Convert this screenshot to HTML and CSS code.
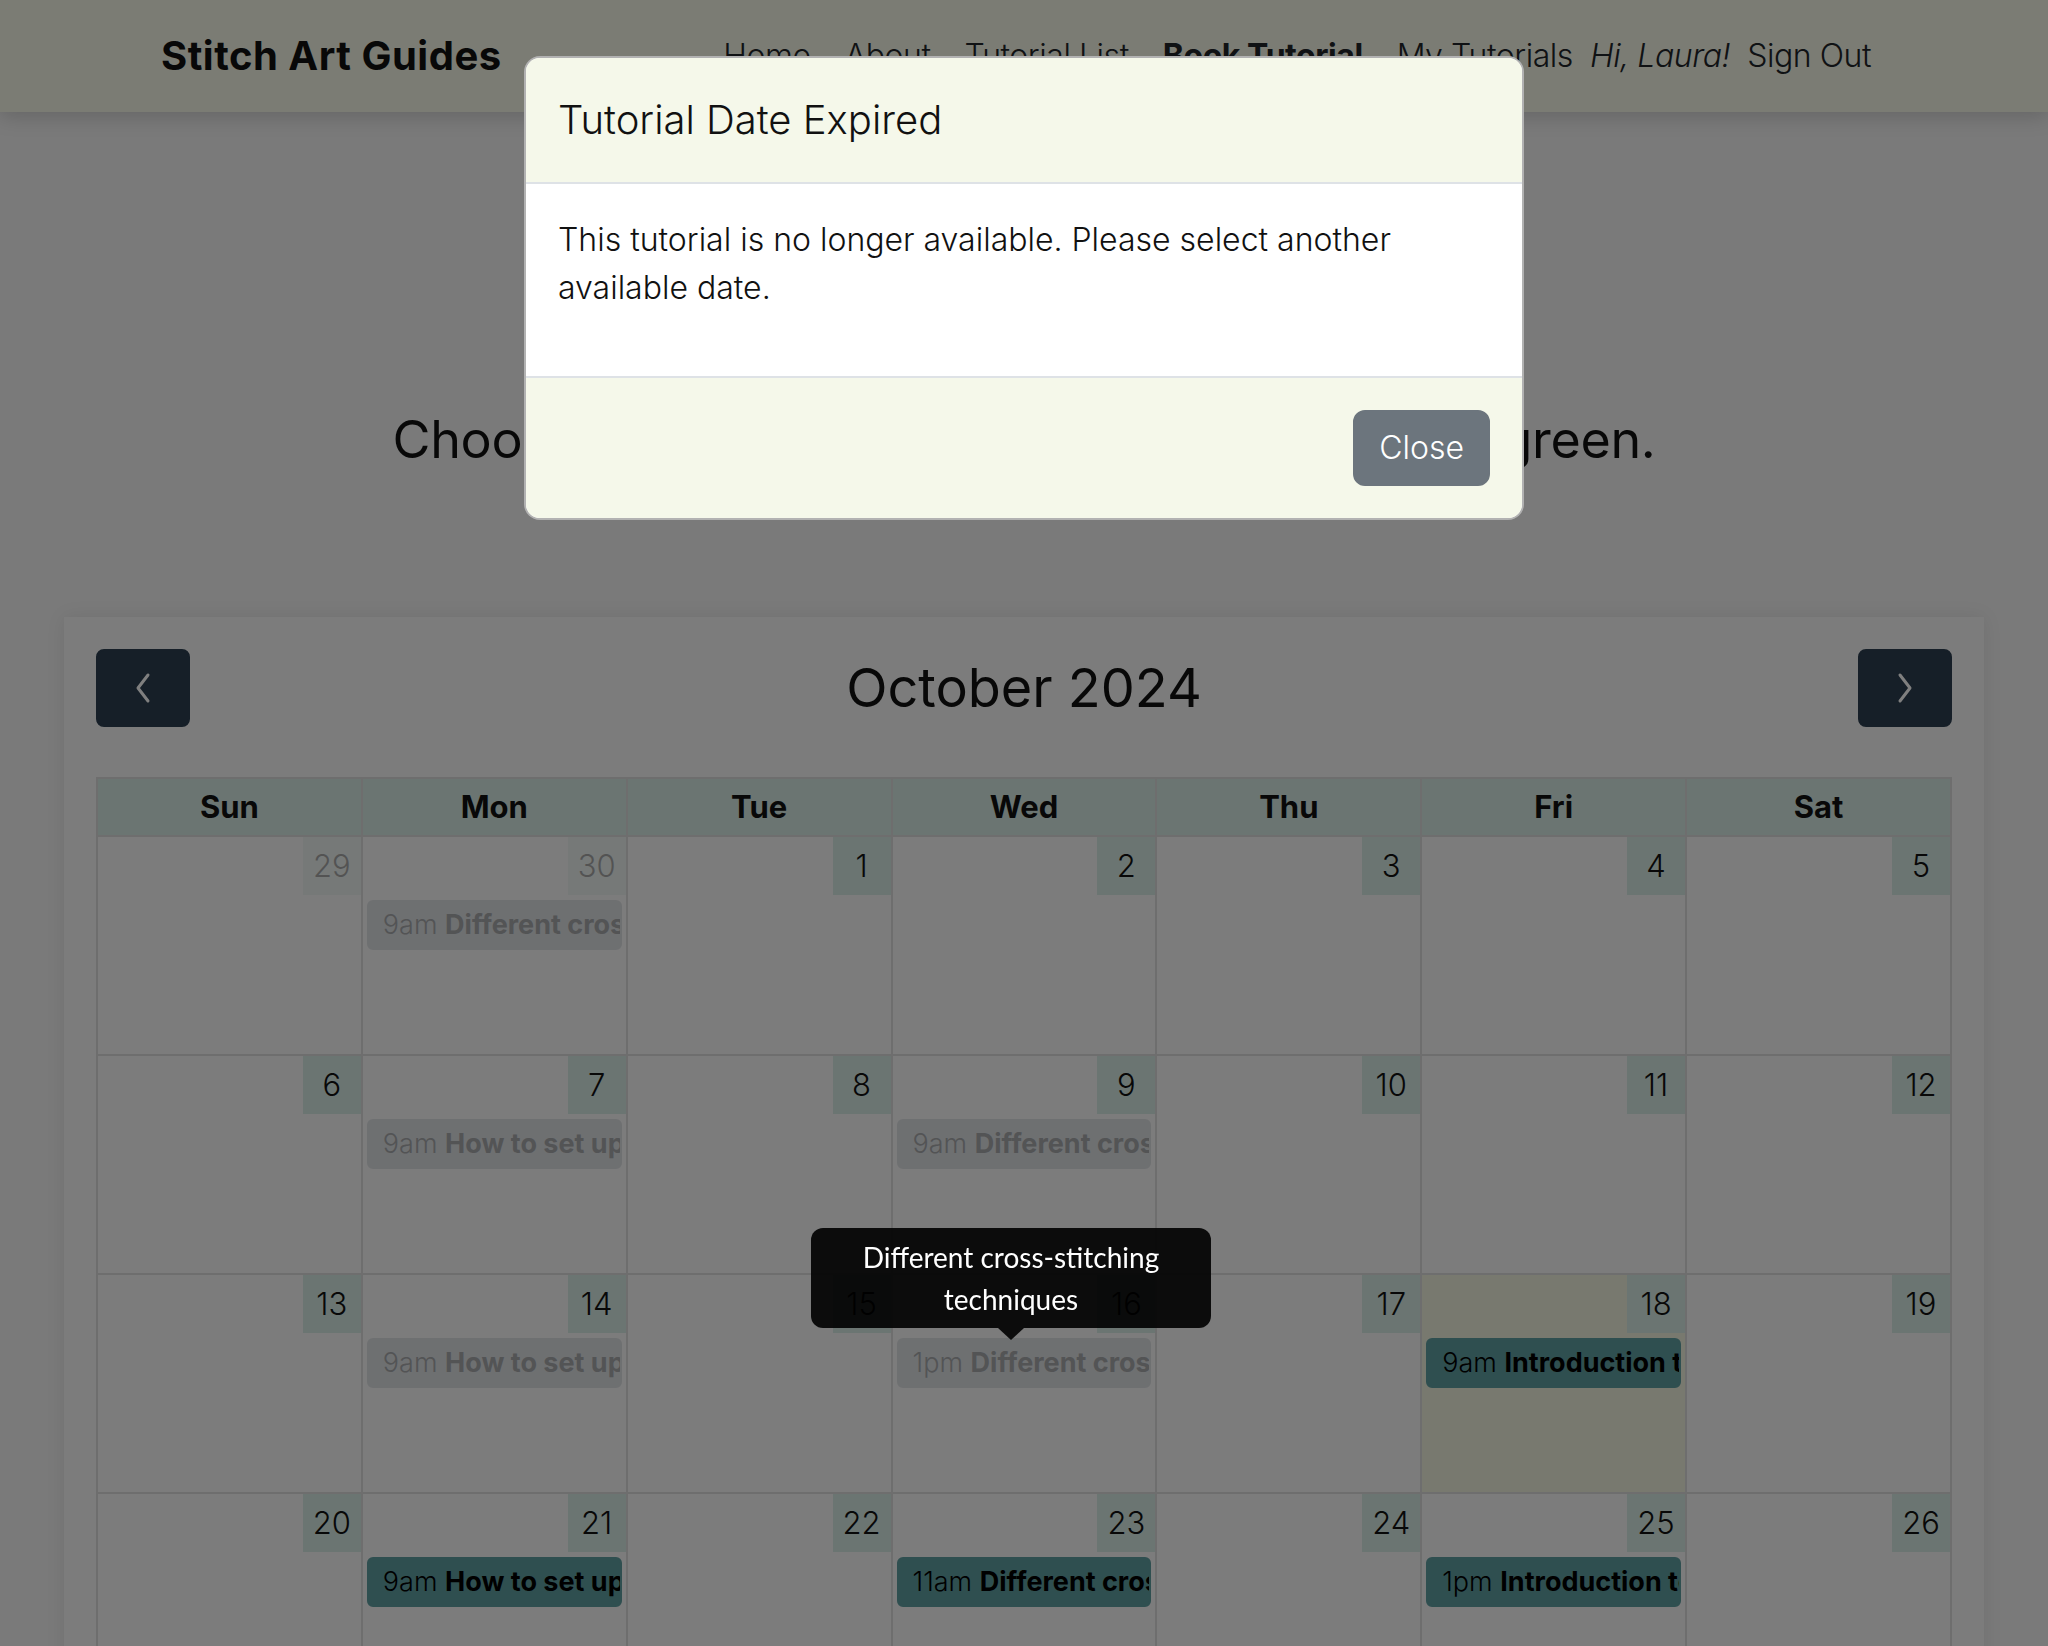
FILE: index.html
```html
<!DOCTYPE html>
<html lang="en">
<head>
<meta charset="utf-8">
<title>Book Tutorial - Stitch Art Guides</title>
<link rel="stylesheet" href="styles.css">
</head>
<body>
<nav class="navbar">
  <a class="brand" href="#">Stitch Art Guides</a>
  <div class="nav-links">
    <a class="nav-link" href="#">Home</a>
    <a class="nav-link" href="#">About</a>
    <a class="nav-link" href="#">Tutorial List</a>
    <a class="nav-link active" href="#">Book Tutorial</a>
    <a class="nav-link" href="#">My Tutorials</a>
    <span class="greet">Hi, Laura!</span>
    <a class="nav-link" href="#">Sign Out</a>
  </div>
</nav>

<main class="container">
  <h2 class="lead-heading">Choose an available date highlighted in green.</h2>

  <section class="cal-card">
    <div class="toolbar">
      <button class="fc-btn" aria-label="prev"><svg width="20" height="32" viewBox="0 0 20 32"><polyline points="15,3 5,16 15,29" fill="none" stroke="#fff" stroke-width="3" stroke-linecap="round" stroke-linejoin="round"/></svg></button>
      <h2 class="cal-title">October 2024</h2>
      <button class="fc-btn" aria-label="next"><svg width="20" height="32" viewBox="0 0 20 32"><polyline points="5,3 15,16 5,29" fill="none" stroke="#fff" stroke-width="3" stroke-linecap="round" stroke-linejoin="round"/></svg></button>
    </div>

    <table class="cal">
      <thead>
        <tr><th>Sun</th><th>Mon</th><th>Tue</th><th>Wed</th><th>Thu</th><th>Fri</th><th>Sat</th></tr>
      </thead>
      <tbody>
        <tr>
          <td class="other"><div class="top"><span class="num">29</span></div></td>
          <td class="other"><div class="top"><span class="num">30</span></div><div class="ev past"><span class="time">9am</span> <b>Different cross-stitching techniques</b></div></td>
          <td><div class="top"><span class="num">1</span></div></td>
          <td><div class="top"><span class="num">2</span></div></td>
          <td><div class="top"><span class="num">3</span></div></td>
          <td><div class="top"><span class="num">4</span></div></td>
          <td><div class="top"><span class="num">5</span></div></td>
        </tr>
        <tr>
          <td><div class="top"><span class="num">6</span></div></td>
          <td><div class="top"><span class="num">7</span></div><div class="ev past"><span class="time">9am</span> <b>How to set up your hoop</b></div></td>
          <td><div class="top"><span class="num">8</span></div></td>
          <td><div class="top"><span class="num">9</span></div><div class="ev past"><span class="time">9am</span> <b>Different cross-stitching techniques</b></div></td>
          <td><div class="top"><span class="num">10</span></div></td>
          <td><div class="top"><span class="num">11</span></div></td>
          <td><div class="top"><span class="num">12</span></div></td>
        </tr>
        <tr>
          <td><div class="top"><span class="num">13</span></div></td>
          <td><div class="top"><span class="num">14</span></div><div class="ev past"><span class="time">9am</span> <b>How to set up your hoop</b></div></td>
          <td><div class="top"><span class="num">15</span></div></td>
          <td><div class="top"><span class="num">16</span></div><div class="ev past"><span class="time">1pm</span> <b>Different cross-stitching techniques</b></div></td>
          <td><div class="top"><span class="num">17</span></div></td>
          <td class="today"><div class="top"><span class="num">18</span></div><div class="ev open"><span class="time">9am</span> <b>Introduction to cross-stitch</b></div></td>
          <td><div class="top"><span class="num">19</span></div></td>
        </tr>
        <tr>
          <td><div class="top"><span class="num">20</span></div></td>
          <td><div class="top"><span class="num">21</span></div><div class="ev open"><span class="time">9am</span> <b>How to set up your hoop</b></div></td>
          <td><div class="top"><span class="num">22</span></div></td>
          <td><div class="top"><span class="num">23</span></div><div class="ev open"><span class="time">11am</span> <b>Different cross-stitching techniques</b></div></td>
          <td><div class="top"><span class="num">24</span></div></td>
          <td><div class="top"><span class="num">25</span></div><div class="ev open"><span class="time">1pm</span> <b>Introduction to cross-stitch</b></div></td>
          <td><div class="top"><span class="num">26</span></div></td>
        </tr>
        <tr>
          <td><div class="top"><span class="num">27</span></div></td>
          <td><div class="top"><span class="num">28</span></div><div class="ev open"><span class="time">9am</span> <b>How to set up your hoop</b></div></td>
          <td><div class="top"><span class="num">29</span></div></td>
          <td><div class="top"><span class="num">30</span></div></td>
          <td><div class="top"><span class="num">31</span></div></td>
          <td class="other"><div class="top"><span class="num">1</span></div></td>
          <td class="other"><div class="top"><span class="num">2</span></div></td>
        </tr>
      </tbody>
    </table>
  </section>
</main>

<div class="backdrop"></div>

<div class="modal" role="dialog">
  <div class="modal-header">
    <h5 class="modal-title">Tutorial Date Expired</h5>
  </div>
  <div class="modal-body">
    <p>This tutorial is no longer available. Please select another available date.</p>
  </div>
  <div class="modal-footer">
    <button class="btn-close-modal">Close</button>
  </div>
</div>

<div class="tooltip" role="tooltip">
  <div class="tooltip-inner">Different cross-stitching techniques</div>
  <div class="tooltip-arrow"></div>
</div>
</body>
</html>
```

FILE: styles.css
```css
* { box-sizing: border-box; }

html, body {
  margin: 0;
  padding: 0;
}

body {
  background: #f4f4f4;
  color: #212529;
  font-family: "Inter", "Lato", sans-serif;
  font-weight: 300;
  font-size: 32px;
  line-height: 1.5;
  min-height: 1646px;
  overflow: hidden;
}

/* ---------- navbar ---------- */
.navbar {
  height: 112px;
  background: #f6f8e8;
  box-shadow: 0 4px 20px rgba(0, 0, 0, 0.18);
  display: flex;
  align-items: center;
  justify-content: space-between;
  padding: 0 160px 0 161px;
  position: relative;
}

.brand {
  font-family: "Inter", sans-serif;
  font-weight: 700;
  font-size: 40px;
  line-height: 60px;
  color: #111;
  text-decoration: none;
  letter-spacing: 0.5px;
}

.nav-links {
  display: flex;
  align-items: center;
  letter-spacing: -0.45px;
}

.nav-link {
  color: #212529;
  text-decoration: none;
  padding: 0 17px;
  line-height: 48px;
}

.nav-link.active {
  font-weight: 700;
}

.greet {
  font-style: italic;
  line-height: 48px;
}

/* ---------- main ---------- */
.container {
  width: 1920px;
  margin: 0 auto;
}

.lead-heading {
  margin: 294px 0 0;
  font-family: "Inter", sans-serif;
  font-weight: 400;
  font-size: 52px;
  letter-spacing: -0.3px;
  word-spacing: 24px;
  line-height: 67px;
  text-align: center;
  color: #111;
}

.cal-card {
  margin-top: 144px;
  background: #f8f8f8;
  box-shadow: 0 0 18px rgba(0, 0, 0, 0.08);
  padding: 32px 32px 0 32px;
  height: 1100px;
}

.toolbar {
  display: flex;
  align-items: center;
  justify-content: space-between;
  margin-bottom: 50px;
}

.fc-btn {
  width: 94px;
  height: 78px;
  background: #2c3e50;
  border: 2px solid #2c3e50;
  border-radius: 8px;
  display: flex;
  align-items: center;
  justify-content: center;
  padding: 0;
}

.cal-title {
  margin: 0;
  font-weight: 400;
  font-size: 54px;
  line-height: 1.2;
  color: #111;
}

/* ---------- calendar grid ---------- */
.cal {
  width: 1856px;
  border-collapse: collapse;
  table-layout: fixed;
  border: 2px solid #dcdcdc;
}

.cal th {
  background: #d6eae4;
  border: 2px solid #dcdcdc;
  font-weight: 700;
  font-size: 31px;
  line-height: 48px;
  padding: 4px;
  color: #111;
}

.cal td {
  border: 2px solid #dcdcdc;
  height: 219px;
  vertical-align: top;
  padding: 0;
}

.cal td.today {
  background: #f1f3df;
}

.top {
  display: flex;
  justify-content: flex-end;
}

.num {
  width: 58px;
  height: 58px;
  display: flex;
  align-items: center;
  justify-content: center;
  background: #d6eae4;
  color: #111;
  font-size: 31px;
}

.other .top {
  opacity: 0.35;
}

.ev {
  margin: 5px 4px 0 4px;
  padding: 2px 14px;
  border: 2px solid;
  border-radius: 6px;
  font-size: 27px;
  line-height: 42px;
  white-space: nowrap;
  overflow: hidden;
}

.ev .time {
  font-weight: 300;
}

.ev b {
  font-weight: 700;
}

.ev.past {
  background: #dde0e3;
  border-color: #dde0e3;
  color: #a6a8ab;
}

.ev.open {
  background: #5f9ea0;
  border-color: #5f9ea0;
  color: #000;
}

/* ---------- modal ---------- */
.backdrop {
  position: fixed;
  inset: 0;
  background: rgba(0, 0, 0, 0.5);
  z-index: 10;
}

.modal {
  position: fixed;
  top: 56px;
  left: 524px;
  width: 1000px;
  z-index: 20;
  border: 2px solid rgba(0, 0, 0, 0.3);
  border-radius: 16px;
  overflow: hidden;
  background: #fff;
}

.modal-header {
  background: #f5f8ea;
  padding: 32px;
  border-bottom: 2px solid #dee2e6;
}

.modal-title {
  margin: 0;
  font-size: 40px;
  font-weight: 300;
  line-height: 60px;
  color: #111;
}

.modal-body {
  background: #fff;
  padding: 32px;
}

.modal-body p {
  margin: 0 0 32px;
  color: #111;
}

.modal-footer {
  background: #f5f8ea;
  border-top: 2px solid #dee2e6;
  padding: 24px;
  display: flex;
  justify-content: flex-end;
}

.btn-close-modal {
  margin: 8px;
  background: #6c757d;
  border: 2px solid #6c757d;
  color: #fff;
  font-family: "Inter", sans-serif;
  font-weight: 300;
  font-size: 32px;
  line-height: 48px;
  padding: 12px 24px;
  border-radius: 12px;
}

/* ---------- tooltip ---------- */
.tooltip {
  position: absolute;
  left: 811px;
  top: 1228px;
  width: 400px;
  z-index: 30;
}

.tooltip-inner {
  background: rgba(0, 0, 0, 0.9);
  color: #fff;
  font-family: "Lato", sans-serif;
  font-weight: 400;
  font-size: 28px;
  line-height: 42px;
  text-align: center;
  padding: 8px 16px;
  border-radius: 12px;
}

.tooltip-arrow {
  width: 0;
  height: 0;
  margin: 0 auto;
  border-left: 13px solid transparent;
  border-right: 13px solid transparent;
  border-top: 12px solid rgba(0, 0, 0, 0.9);
}
```
